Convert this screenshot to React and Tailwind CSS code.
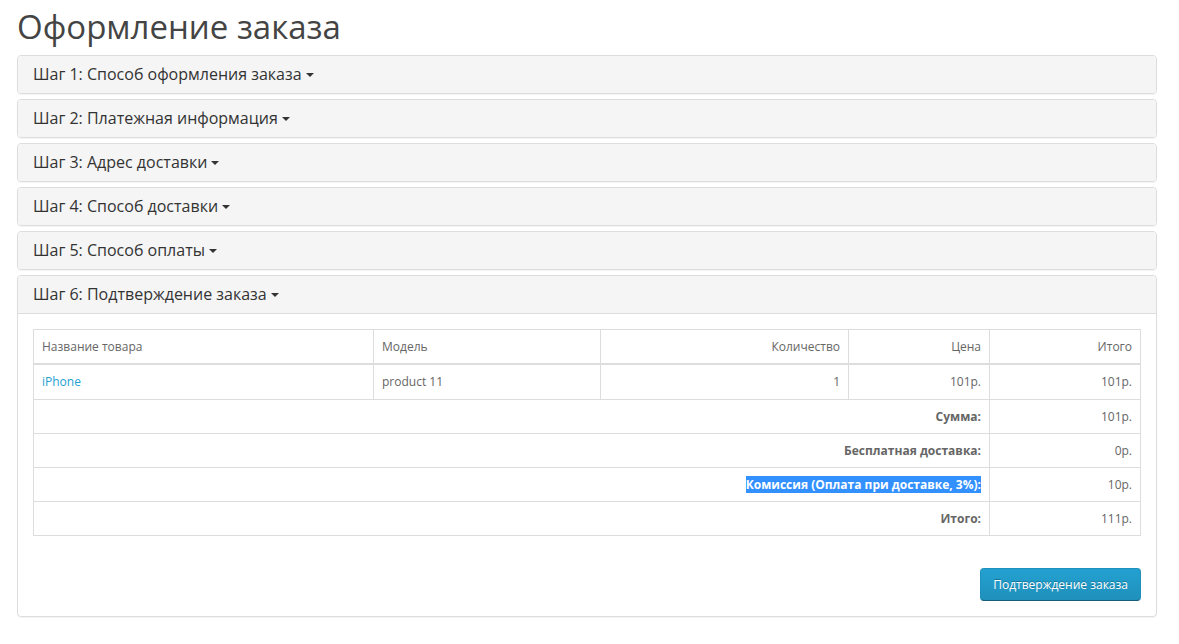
import React from 'react';

const steps = [
  'Шаг 1: Способ оформления заказа',
  'Шаг 2: Платежная информация',
  'Шаг 3: Адрес доставки',
  'Шаг 4: Способ доставки',
  'Шаг 5: Способ оплаты',
];

const totals = [
  { title: 'Сумма:', value: '101р.' },
  { title: 'Бесплатная доставка:', value: '0р.' },
  { title: 'Комиссия (Оплата при доставке, 3%):', value: '10р.', selected: true },
  { title: 'Итого:', value: '111р.' },
];

function Caret() {
  return (
    <span className="inline-block ml-[4px] align-middle w-0 h-0 border-t-[4px] border-t-[#333] border-x-[4px] border-x-transparent relative top-[-1px]" />
  );
}

function PanelHeading({ title }) {
  return (
    <div className="bg-[#f5f5f5] px-[15px] py-[10px]">
      <h4 className="text-[16px] leading-[17px] text-[#333]">
        {title}
        <Caret />
      </h4>
    </div>
  );
}

export default function App() {
  const cell = 'border border-[#ddd] px-2 py-2 leading-[1.42857] align-top';

  return (
    <div className="bg-white min-h-screen font-['Open_Sans',sans-serif] text-[12px] text-[#666]">
      <div className="ml-[17px] w-[1140px] pt-[9px]">
        <h1 className="text-[33px] leading-[1.1] text-[#444] mb-[10px]">Оформление заказа</h1>

        <div className="flex flex-col gap-[5px]">
          {steps.map((s) => (
            <div key={s} className="border border-[#ddd] rounded-[4px] overflow-hidden shadow-[0_1px_1px_rgba(0,0,0,0.05)]">
              <PanelHeading title={s} />
            </div>
          ))}

          <div className="border border-[#ddd] rounded-[4px] overflow-hidden shadow-[0_1px_1px_rgba(0,0,0,0.05)]">
            <div className="border-b border-[#ddd]">
              <PanelHeading title="Шаг 6: Подтверждение заказа" />
            </div>
            <div className="p-[15px]">
              <table className="w-full table-fixed border-collapse">
                <colgroup>
                  <col className="w-[340px]" />
                  <col className="w-[227px]" />
                  <col className="w-[248px]" />
                  <col className="w-[141px]" />
                  <col className="w-[151px]" />
                </colgroup>
                <thead>
                  <tr>
                    <td className={`${cell} border-b-2 text-left`}>Название товара</td>
                    <td className={`${cell} border-b-2 text-left`}>Модель</td>
                    <td className={`${cell} border-b-2 text-right`}>Количество</td>
                    <td className={`${cell} border-b-2 text-right`}>Цена</td>
                    <td className={`${cell} border-b-2 text-right`}>Итого</td>
                  </tr>
                </thead>
                <tbody>
                  <tr>
                    <td className={`${cell} text-left`}>
                      <a href="#" className="text-[#23a1d1]">iPhone</a>
                    </td>
                    <td className={`${cell} text-left`}>product 11</td>
                    <td className={`${cell} text-right`}>1</td>
                    <td className={`${cell} text-right`}>101р.</td>
                    <td className={`${cell} text-right`}>101р.</td>
                  </tr>
                </tbody>
                <tfoot>
                  {totals.map((t) => (
                    <tr key={t.title}>
                      <td colSpan={4} className={`${cell} text-right font-bold`}>
                        {t.selected ? (
                          <span className="bg-[#3390ff] text-white">{t.title}</span>
                        ) : (
                          t.title
                        )}
                      </td>
                      <td className={`${cell} text-right`}>{t.value}</td>
                    </tr>
                  ))}
                </tfoot>
              </table>

              <div className="flex justify-end mt-[32px]">
                <button className="whitespace-nowrap text-white text-[12px] leading-[1.42857] px-[12px] py-[7px] rounded-[4px] border border-[#1f90bb] border-b-[#145e7a] bg-[linear-gradient(to_bottom,#23a1d1,#1f90bb)] [text-shadow:0_-1px_0_rgba(0,0,0,0.25)]">
                  Подтверждение заказа
                </button>
              </div>
            </div>
          </div>
        </div>
      </div>
    </div>
  );
}
